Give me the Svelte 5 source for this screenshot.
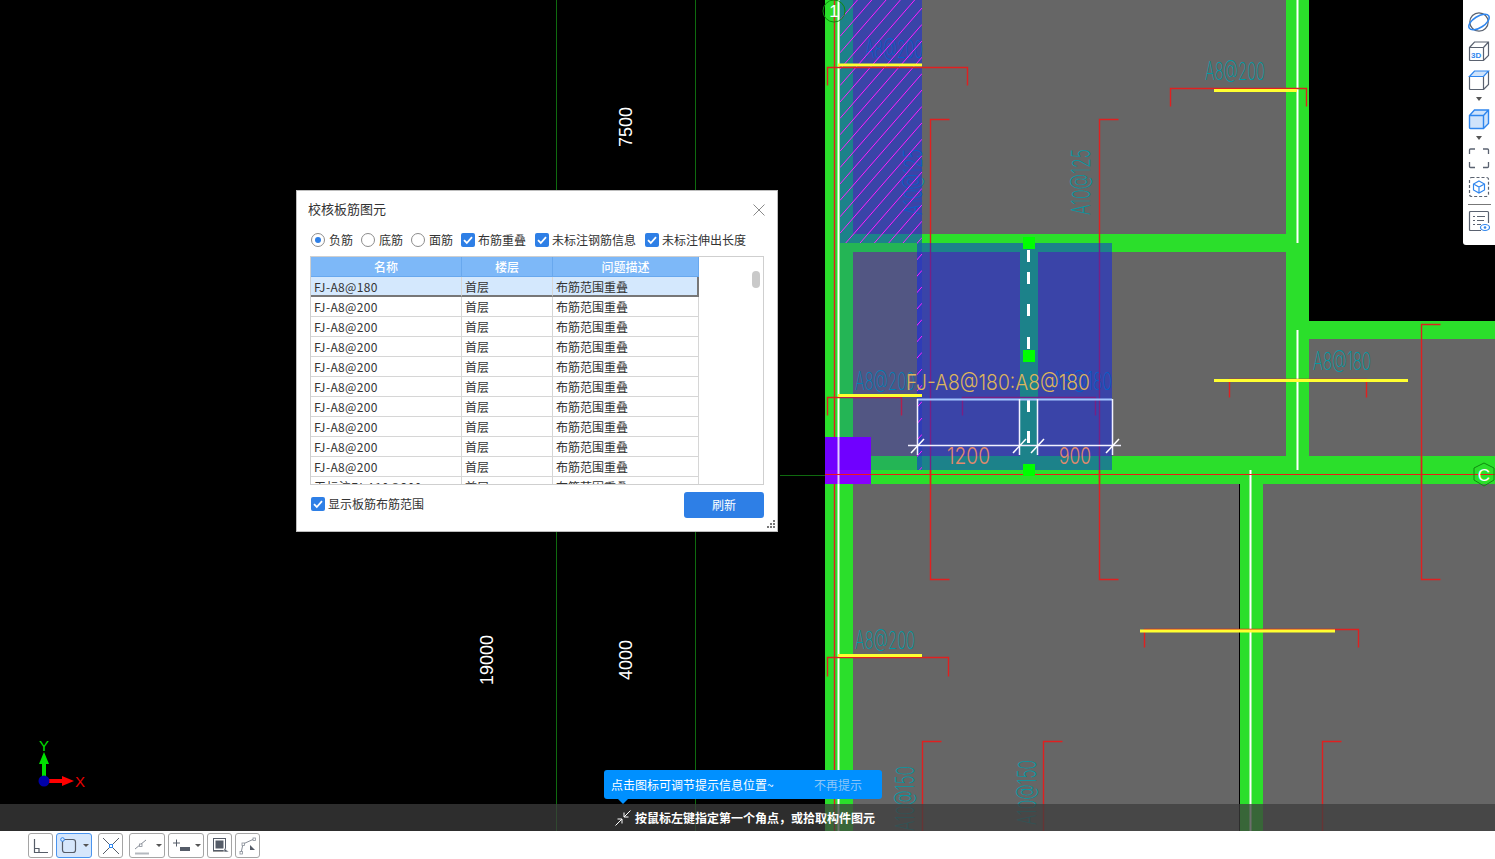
<script>
  const options = [
    { type: "radio", label: "负筋", on: true },
    { type: "radio", label: "底筋" },
    { type: "radio", label: "面筋" },
    { type: "check", label: "布筋重叠", on: true },
    { type: "check", label: "未标注钢筋信息", on: true },
    { type: "check", label: "未标注伸出长度", on: true }
  ];

  const rows = [
    "FJ-A8@180",
    ...Array(9).fill("FJ-A8@200"),
    "无标注FJ-A10@200"
  ];

  // red section marks: [x1, x2, y, tickLength]
  const brackets = [
    [1170.5, 1306.5, 88.5, 18],
    [1229.5, 1366.5, 379.5, 18],
    [827.5, 901.5, 397.5, 18],
    [962.5, 1095.5, 397.5, 18],
    [827.5, 948.5, 657.5, 19],
    [1144.5, 1358.5, 629.5, 18]
  ];

  // tall red marks with a short hook at the ends: [x, y1, y2]
  const hooks = [
    [930.5, 119.5, 579.5],
    [1099.5, 119.5, 579.5],
    [1421.5, 324.5, 579.5],
    [922.5, 741.5, 831],
    [1043.5, 741.5, 831],
    [1322.5, 741.5, 831]
  ];

  const yellow = [
    [838, 922, 65],
    [1214, 1297, 90.5],
    [1214, 1408, 380.5],
    [838, 922, 395.5],
    [838, 922, 655.5],
    [1140, 1335, 631]
  ];

  const labels = [
    ["A8@200", 865, 58, 58],
    ["A8@200", 1205, 80, 60],
    ["A8@180", 1313, 370, 58],
    ["A8@200", 855, 390, 60],
    ["A8@180", 1052, 390, 60],
    ["A8@200", 855, 649, 60]
  ];

  const vlabels = [
    ["A10@125", 922, 215, 66],
    ["A10@125", 1090, 215, 66],
    ["A10@150", 914, 831, 65],
    ["A10@150", 1036, 825, 65]
  ];

  const dimTicks = [917, 1019, 1037, 1112];
  const dashes = [250, 272, 304, 337, 400, 431];

  let hatch = [];
  for (let y = -80; y < 560; y += 16.4) hatch.push(y);

  const tools = [
    { w: 25, gap: 0 },
    { w: 36, gap: 3, on: true, caret: true },
    { w: 25, gap: 6 },
    { w: 36, gap: 6, caret: true },
    { w: 36, gap: 3, caret: true },
    { w: 25, gap: 3 },
    { w: 25, gap: 3 }
  ];
</script>

<div class="stage">
  <svg class="cad" width="1495" height="831" viewBox="0 0 1495 831">
    <defs>
      <clipPath id="hatch-clip">
        <rect x="840" y="0" width="82" height="243" />
        <rect x="917" y="243" width="5" height="227" />
      </clipPath>
    </defs>
    <rect width="1495" height="831" fill="#000" />

    <!-- axis lines behind the plan -->
    <path d="M556.5 0V831M695.5 0V831M780 475.5H825" stroke="#0f6a0f" fill="none" />

    <!-- dimension numbers -->
    <text class="dim" transform="translate(632 147) rotate(-90)">7500</text>
    <text class="dim" transform="translate(493 685) rotate(-90)">19000</text>
    <text class="dim" transform="translate(632 680) rotate(-90)">4000</text>

    <!-- slabs and beams -->
    <path d="M853 0H1286V234H853ZM853 252H1286V456H853ZM1309 339H1495V456H1309ZM853 484H1239V831H853ZM1263 484H1495V831H1263Z" fill="#666" />
    <path d="M825 0H853V234H1286V0H1309V321H1495V339H1309V456H1495V484H1263V831H1240V484H853V831H825ZM853 252V456H1286V252Z" fill="#2bdf2b" fill-rule="evenodd" />
    <rect x="1020" y="252" width="18" height="204" fill="#2bdf2b" />

    <!-- thin white centre lines -->
    <path d="M838.5 0V831M1297.5 0V243M1297.5 330V470M1250.5 470V831" stroke="#fff" stroke-width="2" fill="none" />
    <path d="M834.5 0V831" stroke="#e02020" stroke-width="1.4" />

    {#each labels as [t, x, y, w]}
      <text class="cad-label" {x} {y} textLength={w} lengthAdjust="spacingAndGlyphs">{t}</text>
    {/each}
    {#each vlabels as [t, x, y, w]}
      <text class="cad-label" transform="translate({x} {y}) rotate(-90)" textLength={w} lengthAdjust="spacingAndGlyphs">{t}</text>
    {/each}

    {#each brackets as [a, b, y, t]}
      <path class="red" d="M{a} {y + t}V{y}H{b}V{y + t}" />
    {/each}
    {#each hooks as [x, a, b]}
      <path class="red" d="M{x + 19} {a}H{x}V{b}{b < 800 ? `H${x + 19}` : ""}" />
    {/each}

    <!-- selected slab overlays -->
    <rect x="840" y="0" width="82" height="243" fill="rgb(12 33 237 / .49)" />
    <rect x="840" y="243" width="82" height="227" fill="rgb(12 33 237 / .22)" />
    <rect x="917" y="243" width="195" height="227" fill="rgb(12 33 237 / .49)" />
    <g clip-path="url(#hatch-clip)">
      {#each hatch as y}
        <path d="M840 {y + 100}L922 {y + 6}" stroke="#ff20ff" />
      {/each}
    </g>

    {#each yellow as [a, b, y]}
      <path d="M{a} {y}H{b}" stroke="#ffff30" stroke-width="3" />
    {/each}
    <path class="red" d="M827.5 85.5V67.5H967.5V85.5" />

    <path d="M825 437H871V470H825Z" fill="#7000ff" />
    <path d="M825 470H871V484H825Z" fill="#8800ff" />
    <path d="M838.5 437V484" stroke="#fff" stroke-width="2" opacity=".8" />

    <path d="M825 474.500H1495" stroke="#f01818" stroke-width="1.2" />
    <path class="red" d="M930.500 470V484M1099.500 470V484M1421.500 456V484" />

    <!-- grip points and dashed centre line on the selected beam -->
    {#each dashes as y}
      <rect x="1027" {y} width="3" height="12" fill="#fff" />
    {/each}
    <rect x="1023" y="237" width="12" height="12" fill="#00ff00" />
    <rect x="1023" y="350" width="12" height="12" fill="#00ff00" />
    <rect x="1023" y="464" width="12" height="12" fill="#00ff00" />

    <!-- dimension frame -->
    <path d="M917 399.500H1112" stroke="#a3c5ff" stroke-width="2" />
    <path d="M917.500 399V455M1019.500 399V455M1037.500 399V455M1112.500 399V455M908 445.500H1121" stroke="#f2f2ff" stroke-width="1.500" fill="none" />
    {#each dimTicks as x}
      <path d="M{x - 6} 453L{x + 7} 439" stroke="#fff" stroke-width="1.500" />
    {/each}
    <text class="cad-main" x="906" y="390" textLength="184" lengthAdjust="spacingAndGlyphs">FJ-A8@180:A8@180</text>
    <text class="cad-num" x="947" y="464" textLength="43" lengthAdjust="spacingAndGlyphs">1200</text>
    <text class="cad-num" x="1059" y="464" textLength="32" lengthAdjust="spacingAndGlyphs">900</text>

    <!-- grid bubbles -->
    <circle cx="834" cy="11" r="11" fill="none" stroke="#0f8a0f" />
    <text class="bubble" x="834" y="17">1</text>
    <path d="M1484 463L1494 468V480L1484 486L1474 480V468Z" fill="none" stroke="#0f8a0f" />
    <text class="bubble" x="1484" y="481">C</text>

    <!-- axis gizmo -->
    <path d="M44 781V764" stroke="#00e000" stroke-width="4" />
    <path d="M44 752L49 764H39Z" fill="#00e000" />
    <path d="M44 781H64" stroke="#ff0000" stroke-width="4" />
    <path d="M74 781L62 776V786Z" fill="#ff0000" />
    <circle cx="44" cy="781" r="5.500" fill="#0000a8" />
    <text class="axis" x="39" y="751" fill="#00e000">Y</text>
    <text class="axis" x="75" y="787" fill="#e80000">X</text>
  </svg>

  <!-- dialog -->
  <section class="dialog">
    <header>
      <span>校核板筋图元</span>
      <svg width="12" height="12" viewBox="0 0 12 12"><path d="M.5.5L11.500 11.500M11.500.5L.5 11.500" stroke="#8a8a8a" fill="none" /></svg>
    </header>

    <div class="options">
      {#each options as o}
        <label class="opt">
          {#if o.type === "radio"}
            <span class="radio" class:on={o.on}></span>
          {:else}
            <span class="check"><svg width="14" height="14" viewBox="0 0 14 14"><path d="M3 7.200L5.800 10L11 4.200" stroke="#fff" stroke-width="1.800" fill="none" /></svg></span>
          {/if}
          {o.label}
        </label>
      {/each}
    </div>

    <div class="table-box">
      <table>
        <colgroup><col style="width:151px" /><col style="width:91px" /><col style="width:146px" /></colgroup>
        <thead>
          <tr><th>名称</th><th>楼层</th><th>问题描述</th></tr>
        </thead>
        <tbody>
          {#each rows as name, i}
            <tr class:selected={i === 0}>
              <td class="name">{name}</td>
              <td>首层</td>
              <td>布筋范围重叠</td>
            </tr>
          {/each}
        </tbody>
      </table>
      <div class="thumb"></div>
    </div>

    <footer>
      <label class="opt">
        <span class="check"><svg width="14" height="14" viewBox="0 0 14 14"><path d="M3 7.200L5.800 10L11 4.200" stroke="#fff" stroke-width="1.800" fill="none" /></svg></span>
        显示板筋布筋范围
      </label>
      <button>刷新</button>
    </footer>

    <svg class="grip" width="9" height="9" viewBox="0 0 9 9">
      <path d="M6 0h2v2H6zM3 3h2v2H3zM6 3h2v2H6zM0 6h2v2H0zM3 6h2v2H3zM6 6h2v2H6z" fill="#777" />
    </svg>
  </section>

  <!-- view cube toolbar -->
  <aside class="viewbar">
    <svg width="24" height="22" viewBox="0 0 24 22">
      <circle cx="12" cy="11" r="9.200" fill="none" stroke="#5a6270" stroke-width="1.200" />
      <ellipse cx="12" cy="11" rx="11.500" ry="5.600" transform="rotate(-32 12 11)" fill="none" stroke="#2f86ee" stroke-width="1.500" />
    </svg>
    <svg width="22" height="22" viewBox="0 0 22 22">
      <path d="M1.500 7.500L6.500 2H20.500V15.500L15.500 20.500H2.500Q1.500 20.500 1.500 19.500ZM1.500 7.500H15.500V20.500M15.500 7.500L20.500 2" fill="none" stroke="#5a6270" stroke-width="1.200" />
      <text x="3" y="17.500" class="three">3D</text>
    </svg>
    <div class="cube-wrap">
      <svg width="22" height="22" viewBox="0 0 22 22">
        <path d="M1.500 7.500H15.500V20.500H2.500Q1.500 20.500 1.500 19.500ZM15.500 20.500L20.500 15.500V2" fill="none" stroke="#5a6270" stroke-width="1.200" />
        <path d="M1.500 7.500L6.500 2H20.500L15.500 7.500Z" fill="#cfe3fb" stroke="#2f86ee" stroke-width="1.200" />
      </svg>
      <span class="tri"></span>
    </div>
    <div class="cube-wrap">
      <svg width="22" height="22" viewBox="0 0 22 22">
        <path d="M1.500 7.500L6.500 2H20.500V15.500L15.500 20.500H2.500Q1.500 20.500 1.500 19.500ZM1.500 7.500H15.500V20.500M15.500 7.500L20.500 2" fill="#cfe3fb" stroke="#2f86ee" stroke-width="1.400" />
      </svg>
      <span class="tri"></span>
    </div>
    <svg width="22" height="22" viewBox="0 0 22 22">
      <path d="M7 2H2.500Q1.500 2 1.500 3V7M15 2H19.500Q20.500 2 20.500 3V7M7 20.500H2.500Q1.500 20.500 1.500 19.500V15M15 20.500H19.500Q20.500 20.500 20.500 19.500V15" fill="none" stroke="#5a6270" stroke-width="1.300" />
    </svg>
    <svg width="22" height="22" viewBox="0 0 22 22">
      <rect x="1.500" y="1.500" width="19" height="19" rx="2" fill="none" stroke="#5a6270" stroke-width="1.200" stroke-dasharray="3 2" />
      <path d="M11 5L16.500 8V14L11 17L5.500 14V8ZM5.500 8L11 11L16.500 8M11 11V17" fill="none" stroke="#2f86ee" stroke-width="1.200" />
    </svg>
    <hr />
    <svg width="22" height="22" viewBox="0 0 22 22">
      <path d="M13 20.500H2.500Q1.500 20.500 1.500 19.500V2.500Q1.500 1.500 2.500 1.500H19.500Q20.500 1.500 20.500 2.500V13" fill="none" stroke="#5a6270" stroke-width="1.200" />
      <path d="M5 6.500H7M9 6.500H17M5 10.500H7M9 10.500H16M5 14.500H7M9 14.500H13" stroke="#5a6270" fill="none" />
      <ellipse cx="17" cy="17.500" rx="4.500" ry="3" fill="#fff" stroke="#2f86ee" stroke-width="1.200" />
      <circle cx="17" cy="17.500" r="1.300" fill="#2f86ee" />
    </svg>
  </aside>

  <!-- hint bubble and status line -->
  <div class="hint">
    <span>点击图标可调节提示信息位置~</span>
    <span class="mute">不再提示</span>
  </div>
  <div class="status">
    <svg width="16" height="16" viewBox="0 0 16 16">
      <path d="M15.500 .5L9 7M9 2.500V7H13.500M.5 15.500L7 9M2.500 9H7V13.500" fill="none" stroke="#fff" />
    </svg>
    <span>按鼠标左键指定第一个角点，或拾取构件图元</span>
  </div>

  <!-- bottom snap toolbar -->
  <nav class="tools">
    {#each tools as t, i}
      <button class="tool" class:on={t.on} style="width:{t.w}px;margin-left:{t.gap}px">
        <svg width="20" height="20" viewBox="0 0 20 20">
          {#if i === 0}
            <path d="M3.500 3V16.500H17M3.500 12.500H8V16.500" fill="none" stroke="#555c68" stroke-width="1.200" />
          {:else if i === 1}
            <rect x="3.500" y="3.500" width="13" height="13" rx="2.500" fill="none" stroke="#555c68" stroke-width="1.200" />
            <circle cx="3.500" cy="3.500" r="1.800" fill="#dcebfd" stroke="#2f86ee" />
          {:else if i === 2}
            <path d="M2 2L18 18M18 2L2 18" stroke="#555c68" fill="none" />
            <rect x="8.500" y="8.500" width="3" height="3" fill="#fff" stroke="#2f86ee" />
          {:else if i === 3}
            <path d="M3 13L14 4" stroke="#888e98" fill="none" />
            <path d="M3 17.500H17" stroke="#b4b8be" stroke-width="2" />
            <rect x="7.500" y="8" width="2.500" height="2.500" fill="#fff" stroke="#888e98" stroke-width=".8" />
          {:else if i === 4}
            <path d="M2 7H9M5.500 3.500V10.500" stroke="#555c68" fill="none" />
            <rect x="9" y="11" width="10" height="4" fill="#555c68" />
          {:else if i === 5}
            <rect x="3.500" y="2.500" width="12" height="12" fill="none" stroke="#555c68" />
            <rect x="5.500" y="4.500" width="8" height="8" fill="#555c68" />
            <path d="M3 15.500H15" stroke="#999" />
            <path d="M14 12L19 16H14Z" fill="#555c68" stroke="#fff" stroke-width=".6" />
          {:else}
            <path d="M3 17L5 8L16 3" fill="none" stroke="#888e98" />
            <rect x="2" y="15.500" width="2.500" height="2.500" fill="#fff" stroke="#888e98" stroke-width=".8" />
            <rect x="4" y="7" width="2.500" height="2.500" fill="#fff" stroke="#888e98" stroke-width=".8" />
            <rect x="15" y="2" width="2.500" height="2.500" fill="#fff" stroke="#888e98" stroke-width=".8" />
            <path d="M12 9L17 14H12Z" fill="#555c68" />
          {/if}
        </svg>
        {#if t.caret}<span class="tri small"></span>{/if}
      </button>
    {/each}
  </nav>
</div>

<style>
  :global(body) {
    margin: 0;
    overflow: hidden;
    background: #000;
  }
  .stage {
    position: relative;
    width: 1495px;
    height: 859px;
    overflow: hidden;
    display: flex;
    flex-direction: column;
    font-family: "Noto Sans CJK SC", "Noto Sans", sans-serif;
    font-size: 12px;
    color: #333;
  }
  .cad {
    display: block;
    flex: none;
  }
  .red {
    fill: none;
    stroke: #e02020;
    stroke-width: 1.4;
  }
  .dim {
    font-family: "Liberation Sans", sans-serif;
    font-size: 18px;
    fill: #fff;
  }
  .cad-label {
    font-family: "Inter", "Liberation Sans", sans-serif;
    font-size: 25px;
    font-weight: 200;
    fill: #009aa5;
  }
  .cad-main {
    font-family: "Inter", "Liberation Sans", sans-serif;
    font-size: 22px;
    font-weight: 300;
    fill: #dcb45c;
  }
  .cad-num {
    font-family: "Inter", "Liberation Sans", sans-serif;
    font-size: 23px;
    font-weight: 300;
    fill: #e48a6c;
  }
  .bubble {
    font-family: "Liberation Sans", sans-serif;
    font-size: 17px;
    fill: #fff;
    text-anchor: middle;
  }
  .axis {
    font-family: "Liberation Sans", sans-serif;
    font-size: 15px;
  }

  .dialog {
    position: absolute;
    left: 296px;
    top: 190px;
    width: 482px;
    height: 342px;
    box-sizing: border-box;
    border: 1px solid #bdbdbd;
    background: #fff;
    padding: 0 13px;
    display: flex;
    flex-direction: column;
  }
  .dialog header {
    height: 35px;
    display: flex;
    align-items: center;
    justify-content: space-between;
    font-size: 13px;
    margin: 0 -1px 0 -2px;
    flex: none;
  }
  .dialog header svg {
    margin-top: 3px;
  }
  .options {
    height: 27px;
    display: flex;
    align-items: center;
    gap: 8px;
    padding-left: 1px;
    flex: none;
  }
  .options .opt:nth-child(n + 5) {
    margin-left: 1px;
  }
  .opt {
    display: flex;
    align-items: center;
    gap: 3px;
    white-space: nowrap;
    line-height: 16px;
  }
  .radio {
    width: 14px;
    height: 14px;
    box-sizing: border-box;
    border: 1px solid #8c8c8c;
    border-radius: 50%;
    margin-right: 1px;
    position: relative;
  }
  .radio.on::after {
    content: "";
    position: absolute;
    left: 3px;
    top: 3px;
    width: 6px;
    height: 6px;
    border-radius: 50%;
    background: #2e7fe6;
  }
  .check {
    width: 14px;
    height: 14px;
    border-radius: 2px;
    background: #2e7fe6;
    display: block;
  }
  .check svg {
    display: block;
  }
  .table-box {
    position: relative;
    height: 229px;
    box-sizing: border-box;
    margin-top: 3px;
    border: 1px solid #cfcfcf;
    overflow: hidden;
    flex: none;
  }
  table {
    width: 388px;
    table-layout: fixed;
    border-collapse: separate;
    border-spacing: 0;
  }
  th,
  td {
    height: 20px;
    padding: 1px 0 0;
    box-sizing: border-box;
    vertical-align: top;
    line-height: 18px;
    font-size: 12px;
    white-space: nowrap;
    overflow: hidden;
    border-right: 1px solid #d6d6d6;
    border-bottom: 1px solid #d6d6d6;
  }
  th {
    background: #7db8f8;
    color: #fff;
    font-weight: 500;
    border-color: #68a8ee;
    text-align: center;
  }
  td {
    padding-left: 3px;
  }
  td.name {
    letter-spacing: .35px;
  }
  tr.selected td {
    line-height: 17px;
    background: #d4e8fd;
    border-bottom: 2px solid #777;
  }
  tr.selected td:last-child {
    border-right: 2px solid #777;
  }
  .thumb {
    position: absolute;
    left: 441px;
    top: 14px;
    width: 8px;
    height: 17px;
    border-radius: 4px;
    background: #c9c9c9;
  }
  footer {
    display: flex;
    align-items: flex-start;
    justify-content: space-between;
    padding-top: 7px;
  }
  footer .opt {
    padding: 4px 0 0 1px;
  }
  footer button {
    width: 80px;
    height: 26px;
    padding: 0 0 2px;
    border: 0;
    border-radius: 3px;
    background: #2e7fe6;
    color: #fff;
    font: inherit;
  }
  .grip {
    position: absolute;
    right: 1px;
    bottom: 2px;
  }

  .viewbar {
    position: absolute;
    right: 0;
    top: 0;
    width: 32px;
    height: 245px;
    box-sizing: border-box;
    background: #fff;
    border-bottom-left-radius: 3px;
    padding-top: 11px;
    display: flex;
    flex-direction: column;
    align-items: center;
    gap: 7px;
  }
  .viewbar svg {
    display: block;
    flex: none;
  }
  .viewbar hr {
    width: 23px;
    margin: -1px 0 -2px;
    border: 0;
    border-top: 1px solid #777;
  }
  .three {
    font-family: "Liberation Sans", sans-serif;
    font-size: 8px;
    font-weight: 700;
    fill: #2f86ee;
  }
  .cube-wrap {
    display: flex;
    flex-direction: column;
    align-items: center;
    gap: 6px;
  }
  .tri {
    width: 0;
    height: 0;
    border: 3.5px solid transparent;
    border-top: 4px solid #555;
    border-bottom: 0;
  }
  .tri.small {
    border-width: 3px 3px 0;
    border-color: #555 transparent transparent;
    margin-left: 4px;
  }

  .hint {
    position: absolute;
    left: 604px;
    top: 770px;
    width: 278px;
    height: 29px;
    box-sizing: border-box;
    padding: 0 20px 0 7px;
    border-radius: 3px;
    background: #0090ff;
    color: #fff;
    display: flex;
    align-items: center;
    justify-content: space-between;
    z-index: 2;
  }
  .hint::after {
    content: "";
    position: absolute;
    left: 14px;
    top: 29px;
    border: 5px solid transparent;
    border-top-color: #0090ff;
    border-bottom: 0;
  }
  .mute {
    color: #8cc6f8;
  }
  .status {
    position: absolute;
    left: 0;
    right: 0;
    top: 804px;
    height: 27px;
    box-sizing: border-box;
    padding-right: 5px;
    background: rgb(60 60 60 / .745);
    color: #fff;
    font-weight: 700;
    display: flex;
    align-items: center;
    justify-content: center;
    gap: 4px;
  }
  .status svg {
    flex: none;
  }
  .tools {
    height: 28px;
    background: #fff;
    display: flex;
    align-items: flex-end;
    padding: 0 0 1px 28px;
    box-sizing: border-box;
  }
  .tool {
    height: 25px;
    padding: 0 0 0 2px;
    box-sizing: border-box;
    background: #fff;
    border: 1px solid #a5a5a5;
    border-radius: 3px;
    display: flex;
    align-items: center;
  }
  .tool.on {
    background: #d6e7fc;
    border-color: #4a94ee;
  }
</style>
